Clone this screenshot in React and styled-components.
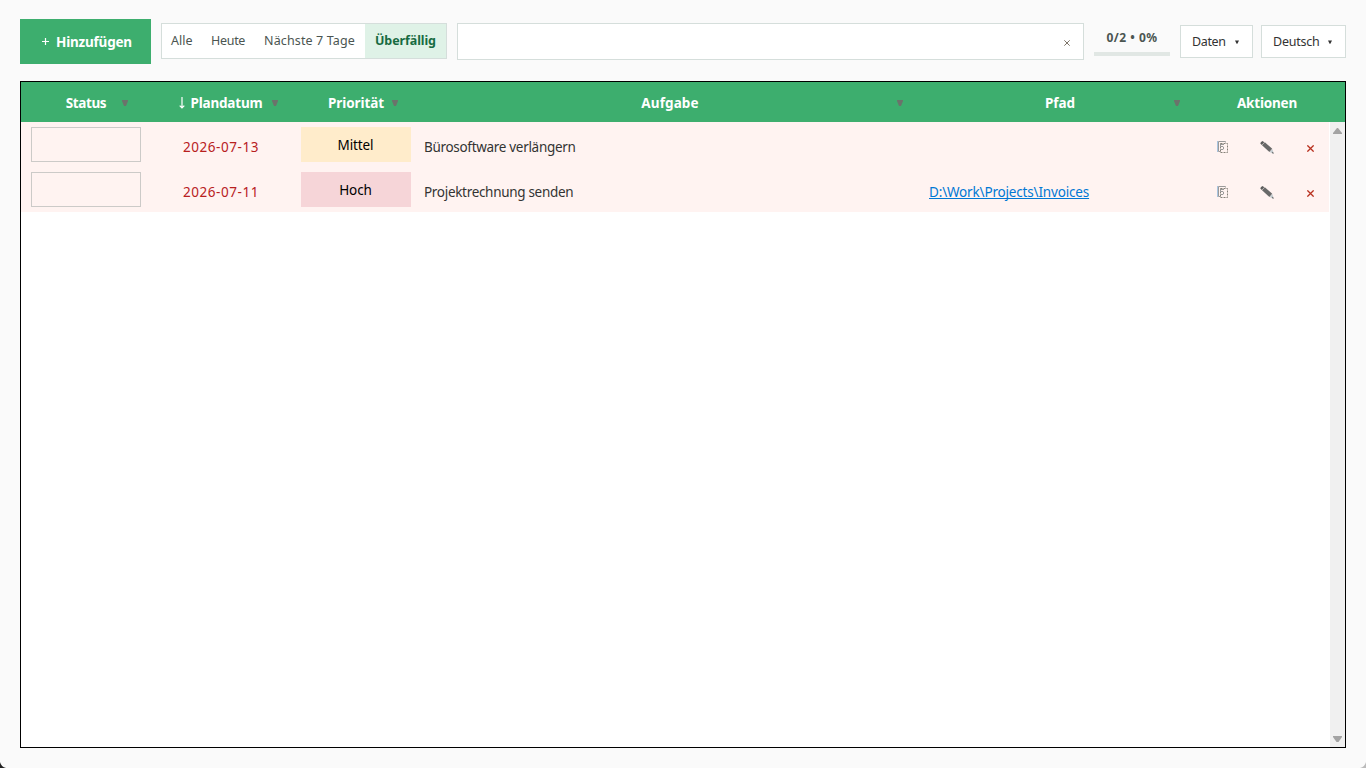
import React from "react";
import styled, { createGlobalStyle } from "styled-components";

const Global = createGlobalStyle`
  *, *::before, *::after { box-sizing: border-box; }
  body { margin: 0; background: #fafafa; overflow: hidden; }
`;

const Page = styled.div`
  position: relative;
  width: 1366px;
  height: 768px;
  padding: 19px 20px 20px;
  display: flex;
  flex-direction: column;
  background: #fafafa;
  overflow: hidden;
  font-family: "Noto Sans", "Open Sans", sans-serif;
  font-size: 14px;
  line-height: 20px;
  color: #333;
`;

const Corner = styled.svg`
  position: absolute;
  bottom: 0;
  ${(p) => (p.$side === "left" ? "left: 0;" : "right: 0;")}
`;

const Text = styled.span`
  display: inline-block;
  white-space: pre;
  font-size: ${(p) => p.$size || 13.5}px;
  letter-spacing: ${(p) => p.$ls || 0}px;
`;

const Toolbar = styled.div`
  display: flex;
  height: 62px;
  align-items: flex-start;
`;

const AddButton = styled.button`
  width: 131px;
  height: 45px;
  border: 0;
  padding: 1px 0 0 22px;
  display: flex;
  align-items: center;
  gap: 6px;
  background: #3dae6e;
  color: #fff;
  font: inherit;
  font-weight: 700;
`;

const Filters = styled.div`
  margin: 4px 0 0 10px;
  width: 286px;
  height: 36px;
  display: flex;
  background: #fff;
  border: 1px solid #d5dedb;
`;

const FilterTab = styled.div`
  width: ${(p) => p.$width}px;
  padding-left: ${(p) => (p.$active ? 10 : 9)}px;
  display: flex;
  align-items: center;
  background: ${(p) => (p.$active ? "#dff2e7" : "transparent")};
  color: ${(p) => (p.$active ? "#176b42" : "#4b5551")};
  font-weight: ${(p) => (p.$active ? 700 : 400)};
`;

const Search = styled.div`
  margin: 4px 0 0 10px;
  width: 627px;
  height: 37px;
  display: flex;
  align-items: center;
  justify-content: flex-end;
  padding: 2px 13px 0 0;
  background: #fff;
  border: 1px solid #d5dedb;
`;

const Progress = styled.div`
  margin: 9px 0 0 10px;
  width: 76px;
  height: 28px;
  display: flex;
  justify-content: center;
  border-bottom: 4px solid #e1e7e4;
  color: #4b5551;
  font-weight: 700;
`;

const Menu = styled.div`
  margin: 6px 0 0 ${(p) => p.$gap}px;
  width: ${(p) => p.$width}px;
  height: 33px;
  padding: 0 13px 0 11px;
  display: flex;
  align-items: center;
  justify-content: space-between;
  background: #fff;
  border: 1px solid #d5dedb;
  color: #333;
`;

const Table = styled.div`
  flex: 1;
  display: flex;
  flex-direction: column;
  background: #fff;
  border: 1px solid #000;
  overflow: hidden;
`;

const columns = "130px 140px 130px 498px 282px 132px";

const HeaderRow = styled.div`
  flex: none;
  height: 40px;
  padding-top: 2px;
  display: grid;
  grid-template-columns: ${columns};
  background: #3dae6e;
  color: #fff;
  font-weight: 700;
`;

const HeaderCell = styled.div`
  display: grid;
  align-items: center;
  > * { grid-area: 1 / 1; }
`;

const HeaderTitle = styled.div`
  justify-self: center;
  display: flex;
  align-items: center;
  gap: 5px;
`;

const SortMark = styled.svg`
  justify-self: end;
  margin-right: ${(p) => p.$right}px;
`;

const Body = styled.div`
  flex: 1;
  display: flex;
`;

const Rows = styled.div`
  width: 1308px;
  overflow: hidden;
`;

const Row = styled.div`
  height: 45px;
  display: grid;
  grid-template-columns: ${columns};
  background: #fff3f1;
`;

const Cell = styled.div`
  display: flex;
  align-items: center;
  justify-content: ${(p) => (p.$start ? "flex-start" : "center")};
  padding-left: ${(p) => p.$start || 0}px;
  padding-top: ${(p) => p.$top || 0}px;
  color: ${(p) => p.$color || "#333"};
`;

const StatusBox = styled.div`
  width: 110px;
  height: 35px;
  border: 1px solid #cccac8;
`;

const Priority = styled(StatusBox)`
  display: flex;
  align-items: center;
  justify-content: center;
  padding: 1px 1px 0 0;
  border: 0;
  background: ${(p) => (p.$high ? "#f6d5d8" : "#ffeccb")};
  color: #000;
`;

const PathLink = styled.a`
  display: block;
  white-space: pre;
  font-size: 13.5px;
  letter-spacing: -0.17px;
  color: #0078d4;
  text-decoration: underline;
  text-decoration-thickness: 1px;
  text-decoration-skip-ink: none;
  text-underline-offset: 1px;
`;

const Actions = styled.div`
  padding-top: 6px;
  display: grid;
  grid-template-columns: repeat(3, 44px);
  align-items: center;
  justify-items: center;
`;

const DeleteSlot = styled.div`
  display: flex;
  padding: 2px 1px 0 0;
`;

const Scrollbar = styled.div`
  margin-left: 1px;
  width: 15px;
  display: flex;
  flex-direction: column;
  align-items: center;
  justify-content: space-between;
  padding: 6px 1px 4px 0;
  background: #f0f0f0;
`;

function Triangle({ right }) {
  return (
    <SortMark $right={right} width="6" height="6" viewBox="0 0 6 6">
      <path d="M0 0h6v1L4 6H2L0 1z" fill="#6b736b" />
    </SortMark>
  );
}

function Caret() {
  return (
    <svg width="4" height="4" viewBox="0 0 4 4">
      <path d="M0 .5h4L2.400 3.800h-.8z" fill="#333" />
    </svg>
  );
}

function Cross({ color, size = 6, width = 1.2 }) {
  return (
    <svg width={size} height={size} viewBox="0 0 6 6">
      <path d="M.3.3l5.400 5.400M5.700.3L.3 5.700" stroke={color} strokeWidth={width} />
    </svg>
  );
}

function CopyIcon() {
  return (
    <svg width="12" height="13" viewBox="0 0 12 13" fill="none">
      <path d="M3.500 10.500h-2V.5h7v1" stroke="#9a9a9a" />
      <path d="M.5 0v11" stroke="#a9c4e0" />
      <path d="M3.500 2.500h7v9h-7z" stroke="#858078" strokeDasharray="2 1" />
      <path d="M7 3.500H3.500v2H6q1.500 1.500 0 3H3.500" stroke="#999" />
    </svg>
  );
}

function PencilIcon() {
  return (
    <svg width="14" height="13" viewBox="0 0 14 13">
      <path d="M.3 2.500Q.5.500 2.600 0L4.300 1.300 1.800 4z" fill="#5c5c5c" />
      <path d="M2 4.300L4.800 1.300l7.400 6.500-2.800 3.100z" fill="#696969" />
      <path d="M9.600 11.100l2.700-3 1.400 4.600z" fill="#c3cbd0" />
      <path d="M11.800 12l1.200-1.200.7 2z" fill="#555" />
    </svg>
  );
}

const headers = [
  { label: "Status", mark: 23, ls: -0.4 },
  { label: "Plandatum", mark: 13, sorted: true, ls: -0.17 },
  { label: "Priorität", mark: 23, ls: -0.1 },
  { label: "Aufgabe", mark: 16, ls: 0.1 },
  { label: "Pfad", mark: 21 },
  { label: "Aktionen", ls: -0.2 },
];

const tasks = [
  { date: "2026-07-13", priority: "Mittel", task: "Bürosoftware verlängern", path: "" },
  { date: "2026-07-11", priority: "Hoch", high: true, task: "Projektrechnung senden", path: "D:\\Work\\Projects\\Invoices" },
];

export default function App() {
  return (
    <Page>
      <Global />
      <Toolbar>
        <AddButton>
          <svg width="8" height="8" viewBox="0 0 8 8"><path d="M3.500 0v7M0 3.500h7" stroke="#fff" strokeWidth="1.2" /></svg>
          <Text $ls={-0.2}>Hinzufügen</Text>
        </AddButton>
        <Filters>
          <FilterTab $width={40}><Text $size={12.5}>Alle</Text></FilterTab>
          <FilterTab $width={53}><Text $size={12.5} $ls={-0.3}>Heute</Text></FilterTab>
          <FilterTab $width={110}><Text $size={12.5} $ls={0.13}>Nächste 7 Tage</Text></FilterTab>
          <FilterTab $width={81} $active><Text $size={12.5} $ls={-0.1}>Überfällig</Text></FilterTab>
        </Filters>
        <Search><Cross color="#7d7468" width={1} /></Search>
        <Progress><Text $size={12} $ls={0.5}>0/2 • 0%</Text></Progress>
        <Menu $gap={10} $width={73}><Text $size={12.5} $ls={-0.35}>Daten</Text><Caret /></Menu>
        <Menu $gap={8} $width={85}><Text $size={12.5} $ls={-0.25}>Deutsch</Text><Caret /></Menu>
      </Toolbar>
      <Table>
        <HeaderRow>
          {headers.map((h) => (
            <HeaderCell key={h.label}>
              <HeaderTitle>
                {h.sorted && (
                  <svg width="6" height="12" viewBox="0 0 6 12" fill="none" stroke="#fff" strokeWidth="1.2">
                    <path d="M3 0v11M.7 8.700L3 11l2.300-2.300" />
                  </svg>
                )}
                <Text $ls={h.ls}>{h.label}</Text>
              </HeaderTitle>
              {h.mark && <Triangle right={h.mark} />}
            </HeaderCell>
          ))}
        </HeaderRow>
        <Body>
          <Rows>
            {tasks.map((t) => (
              <Row key={t.date}>
                <Cell><StatusBox /></Cell>
                <Cell $top={4} $color="#b8201e"><Text $ls={0.55}>{t.date}</Text></Cell>
                <Cell><Priority $high={t.high}><Text $ls={-0.1}>{t.priority}</Text></Priority></Cell>
                <Cell $top={4} $start={3}><Text $ls={-0.31}>{t.task}</Text></Cell>
                <Cell $top={4} $start={10}>{t.path && <PathLink>{t.path}</PathLink>}</Cell>
                <Actions>
                  <CopyIcon />
                  <PencilIcon />
                  <DeleteSlot><Cross color="#b8301e" size={7} width={1.1} /></DeleteSlot>
                </Actions>
              </Row>
            ))}
          </Rows>
          <Scrollbar>
            <svg width="9" height="7" viewBox="0 0 9 7"><path d="M4 0h1l4 5v1H0V5z" fill="#a3a3a3" /></svg>
            <svg width="9" height="7" viewBox="0 0 9 7"><path d="M0 0h9v1L5.500 6h-2L0 1z" fill="#a3a3a3" /></svg>
          </Scrollbar>
        </Body>
      </Table>
      <Corner $side="left" width="8" height="8" viewBox="0 0 8 8"><path d="M0 2Q1.200 6.800 6 8H0z" fill="#222" /></Corner>
      <Corner $side="right" width="8" height="8" viewBox="0 0 8 8"><path d="M8 2Q6.800 6.800 2 8h6z" fill="#bbb" /></Corner>
    </Page>
  );
}
